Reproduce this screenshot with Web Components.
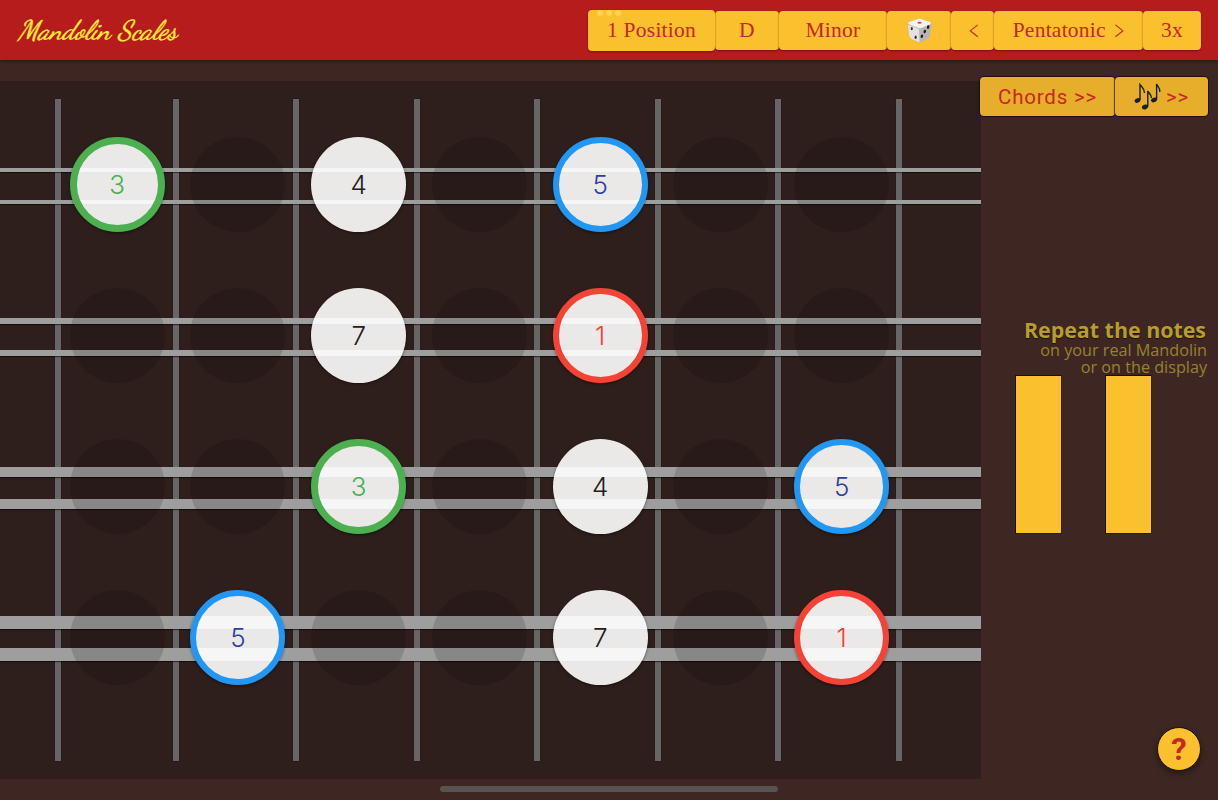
<!DOCTYPE html>
<html lang="en">
<head>
<meta charset="utf-8">
<title>Mandolin Scales</title>
<style>
  html, body { margin: 0; height: 100%; background: #3e2723; }
</style>
</head>
<body>
<scale-app>
  <scale-header slot="header">
    <span slot="title">Mandolin Scales</span>
    <scale-button width="127" tall dots>1 Position</scale-button>
    <scale-button width="64">D</scale-button>
    <scale-button width="108">Minor</scale-button>
    <scale-button width="64"><dice-icon></dice-icon></scale-button>
    <scale-button width="43"><span>&lt;</span></scale-button>
    <scale-button width="149">Pentatonic&nbsp;<span>&gt;</span></scale-button>
    <scale-button width="58">3x</scale-button>
  </scale-header>
  <fret-board slot="board"></fret-board>
  <side-panel slot="side">
    <panel-button slot="buttons" width="135">Chords &gt;&gt;</panel-button>
    <panel-button slot="buttons" width="93"><notes-icon></notes-icon>&gt;&gt;</panel-button>
    <span slot="heading">Repeat the notes</span>
    <span slot="line">on your real Mandolin</span>
    <span slot="line">or on the display</span>
  </side-panel>
</scale-app>

<script>
"use strict";

class ScaleApp extends HTMLElement {
  constructor() {
    super();
    this.attachShadow({mode: "open"}).innerHTML = `
      <style>
        :host { display: grid; grid-template-rows: 60px 740px; height: 800px; width: 1218px; overflow: hidden; position: relative; background: #3e2723; }
        main { display: flex; min-height: 0; }
        .home { position: absolute; left: 440px; top: 786px; width: 338px; height: 6px; border-radius: 3px; background: #585352; }
      </style>
      <slot name="header"></slot>
      <main><slot name="board"></slot><slot name="side"></slot></main>
      <div class="home"></div>`;
  }
}
customElements.define("scale-app", ScaleApp);

class ScaleHeader extends HTMLElement {
  constructor() {
    super();
    this.attachShadow({mode: "open"}).innerHTML = `
      <style>
        :host { display: flex; align-items: center; height: 60px; padding: 0 17px 0 18px; box-sizing: border-box; background: #b71c1c; box-shadow: 0 1px 4px rgba(0,0,0,.45); position: relative; z-index: 2; }
        .title { font: italic 400 27px/1 "Dancing Script", cursive; color: #ffeb3b; -webkit-text-stroke: .4px #ffeb3b; margin-right: auto; }
        .buttons { display: flex; align-items: center; }
      </style>
      <div class="title"><slot name="title"></slot></div>
      <div class="buttons"><slot></slot></div>`;
  }
}
customElements.define("scale-header", ScaleHeader);

class ScaleButton extends HTMLElement {
  constructor() {
    super();
    this.attachShadow({mode: "open"}).innerHTML = `
      <style>
        :host { display: flex; align-items: center; justify-content: center; position: relative; box-sizing: border-box; height: 39px; padding-top: 2px; background: #fbc02d; color: #c62828; font: 400 21.5px/1 "Liberation Serif", serif; letter-spacing: .25px; border-radius: 4px; box-shadow: 0 1px 2px rgba(90,0,0,.6); white-space: nowrap; }
        :host([tall]) { height: 41px; z-index: 1; }
        .dots { position: absolute; left: 9px; top: 0; display: none; gap: 3px; }
        :host([dots]) .dots { display: flex; }
        .dots i { width: 6px; height: 6px; border-radius: 50%; background: #fdd35c; }
        ::slotted(span) { display: inline-block; font-size: 17px; margin-left: 3px; transform: scaleY(1.6); }
      </style>
      <div class="dots"><i></i><i></i><i></i></div>
      <slot></slot>`;
  }
  connectedCallback() {
    this.style.width = this.getAttribute("width") + "px";
  }
}
customElements.define("scale-button", ScaleButton);

class DiceIcon extends HTMLElement {
  constructor() {
    super();
    this.attachShadow({mode: "open"}).innerHTML = `
      <style>:host { display: block; width: 27px; height: 27px; margin-top: -2px; }</style>
      <svg viewBox="0 0 28 28" width="27" height="27">
        <path d="M14 1.5 25.5 5.5Q27 6.5 26.5 8L24.5 20Q24 21.5 22.5 22.5L14 27 5.5 22.5Q3.5 21 3 19.5L1.5 8Q1 6.5 2.5 5.5Z" fill="#b8b6b2"/>
        <path d="M14 1.5 25.5 5.5Q26.5 6.5 25 7.5L14.5 12 3 7.5Q1.5 6.5 2.5 5.5Z" fill="#f4f3f0"/>
        <path d="M2 8 13.5 12.5 14 26.5 5.5 22.5Q3.8 21 3.3 19.5Z" fill="#e4e2de"/>
        <ellipse cx="14" cy="6" rx="2.2" ry="1.1" fill="#e53935"/>
        <ellipse cx="6" cy="12" rx="1.1" ry="1.7" fill="#2b2b2b"/>
        <ellipse cx="10" cy="21" rx="1.1" ry="1.7" fill="#2b2b2b"/>
        <ellipse cx="23" cy="10.5" rx="1.3" ry="1.9" fill="#1d1d1d" transform="rotate(15 23 10.5)"/>
        <ellipse cx="19.5" cy="15" rx="1.3" ry="1.9" fill="#1d1d1d" transform="rotate(15 19.5 15)"/>
        <ellipse cx="16.5" cy="20" rx="1.3" ry="1.9" fill="#1d1d1d" transform="rotate(15 16.5 20)"/>
      </svg>`;
  }
}
customElements.define("dice-icon", DiceIcon);

class NotesIcon extends HTMLElement {
  constructor() {
    super();
    this.attachShadow({mode: "open"}).innerHTML = `
      <style>:host { display: block; width: 27px; height: 27px; margin: -2px 5px 0 0; }</style>
      <svg viewBox="0 0 27 27" width="27" height="27" fill="#16202c" stroke="#16202c">
        <ellipse cx="3.5" cy="17.5" rx="3" ry="2.2" stroke="none" transform="rotate(-20 3.5 17.5)"/>
        <path d="M6 17V1.5C7.5 4 10.5 5 10.5 10" fill="none" stroke-width="1.4"/>
        <ellipse cx="11" cy="24" rx="3.2" ry="2.3" stroke="none" transform="rotate(-20 11 24)"/>
        <path d="M13.8 23.5V8C15 10.5 17.5 11.5 17.5 15" fill="none" stroke-width="1.4"/>
        <ellipse cx="20" cy="17" rx="3" ry="2.2" stroke="none" transform="rotate(-20 20 17)"/>
        <path d="M22.6 16.5V1C23.5 4 26.5 4.5 25.8 9" fill="none" stroke-width="1.4"/>
      </svg>`;
  }
}
customElements.define("notes-icon", NotesIcon);

class NoteDot extends HTMLElement {
  constructor() {
    super();
    this.attachShadow({mode: "open"}).innerHTML = `
      <style>
        :host { display: flex; align-items: center; justify-content: center; box-sizing: border-box; width: 95px; height: 95px; border-radius: 50%; background: rgba(0,0,0,.14); font: 300 26px/1 Inter, "Liberation Sans", sans-serif; }
        :host([degree]) { background: rgba(255,255,255,.9); color: #212121; box-shadow: 0 1px 3px rgba(0,0,0,.5); }
        :host([degree="1"]) { border: 6.5px solid #f44336; color: #f44336; }
        :host([degree="3"]) { border: 7.5px solid #4caf50; color: #4caf50; }
        :host([degree="5"]) { border: 6px solid #2196f3; color: #303f9f; }
      </style>
      <slot></slot>`;
  }
  connectedCallback() {
    this.textContent = this.getAttribute("degree") || "";
  }
}
customElements.define("note-dot", NoteDot);

const COURSES = [4, 6, 10, 13];
const NOTES = [
  [3, 0, 4, 0, 5, 0, 0],
  [0, 0, 7, 0, 1, 0, 0],
  [0, 0, 3, 0, 4, 0, 5],
  [0, 5, 0, 0, 7, 0, 1]
];

class FretBoard extends HTMLElement {
  constructor() {
    super();
    const frets = Array.from({length: 8}, () => "<i></i>").join("");
    const strings = COURSES.map((size) =>
      `<div class="course" style="--size:${size}px"><b></b><b></b></div>`).join("");
    const notes = NOTES.flat().map((degree) =>
      `<div class="cell"><note-dot ${degree ? `degree="${degree}"` : ""}></note-dot></div>`).join("");
    this.attachShadow({mode: "open"}).innerHTML = `
      <style>
        :host { display: grid; width: 981px; height: 698px; margin: 21px 0; background: #2e1f1c; flex: none; overflow: hidden; }
        .layer { grid-area: 1 / 1; }
        .frets { display: grid; grid-template-columns: 118px repeat(7, 120.6px); padding: 18px 0 18px 54.5px; }
        .frets i { width: 6px; background: #666; box-shadow: 0 0 1px rgba(0,0,0,.6); }
        .strings { display: grid; grid-auto-rows: 151px; padding-top: 29px; }
        .course { display: flex; flex-direction: column; height: 151px; justify-content: center; }
        .course b { display: block; height: var(--size); margin: calc((32px - var(--size)) / 2) 0; background: #9e9e9e; box-shadow: 0 1px 1px rgba(0,0,0,.55); }
        .notes { display: grid; grid-template-columns: repeat(7, 120.75px); grid-auto-rows: 151px; padding: 28px 0 0 56.8px; }
        .cell { display: flex; align-items: center; justify-content: center; }
      </style>
      <div class="layer frets">${frets}</div>
      <div class="layer strings">${strings}</div>
      <div class="layer notes">${notes}</div>`;
  }
}
customElements.define("fret-board", FretBoard);

class PanelButton extends HTMLElement {
  constructor() {
    super();
    this.attachShadow({mode: "open"}).innerHTML = `
      <style>
        :host { display: flex; align-items: center; justify-content: center; box-sizing: border-box; height: 39px; padding-top: 2px; background: #e6ae2a; color: #c62828; font: 400 20.5px/1 Roboto, sans-serif; letter-spacing: .8px; border-radius: 4px; box-shadow: 0 0 1px 1px rgba(15,5,5,.7); white-space: nowrap; }
      </style>
      <slot></slot>`;
  }
  connectedCallback() {
    this.style.width = this.getAttribute("width") + "px";
  }
}
customElements.define("panel-button", PanelButton);

class SidePanel extends HTMLElement {
  constructor() {
    super();
    this.attachShadow({mode: "open"}).innerHTML = `
      <style>
        :host { display: flex; flex-direction: column; flex: 1; min-width: 0; position: relative; padding: 17px 10px 29px 0; box-sizing: border-box; font-family: "Open Sans", sans-serif; }
        .buttons { display: flex; margin-left: -1px; }
        .text { display: flex; flex-direction: column; align-items: flex-end; margin-top: 201px; padding-right: 1px; }
        .heading { font-weight: 700; font-size: 21.4px; line-height: 26px; color: #b89d2c; text-shadow: 0 1px 1px rgba(0,0,0,.6); margin-right: 1px; }
        .lines { display: flex; flex-direction: column; align-items: flex-end; font-size: 16.2px; line-height: 16.5px; color: #96822f; margin-top: -1px; }
        .bars { display: flex; gap: 43px; margin: 0 0 0 34px; }
        .bars i { width: 47px; height: 159px; background: #fbc02d; box-sizing: border-box; border: 1px solid #1a0f0d; border-bottom-color: #2a1a17; border-right-color: #33211e; }
        .help { display: flex; align-items: center; justify-content: center; margin: auto 7px 0 auto; width: 44px; height: 44px; box-sizing: border-box; border-radius: 50%; background: #fbc02d; border: 1px solid #1a0f0d; color: #c62828; font: 700 31px/1 Roboto, sans-serif; box-shadow: 0 3px 6px rgba(0,0,0,.4); }
      </style>
      <div class="buttons"><slot name="buttons"></slot></div>
      <div class="text">
        <div class="heading"><slot name="heading"></slot></div>
        <div class="lines"><slot name="line"></slot></div>
      </div>
      <div class="bars"><i></i><i></i></div>
      <div class="help">?</div>`;
  }
}
customElements.define("side-panel", SidePanel);
</script>
</body>
</html>
